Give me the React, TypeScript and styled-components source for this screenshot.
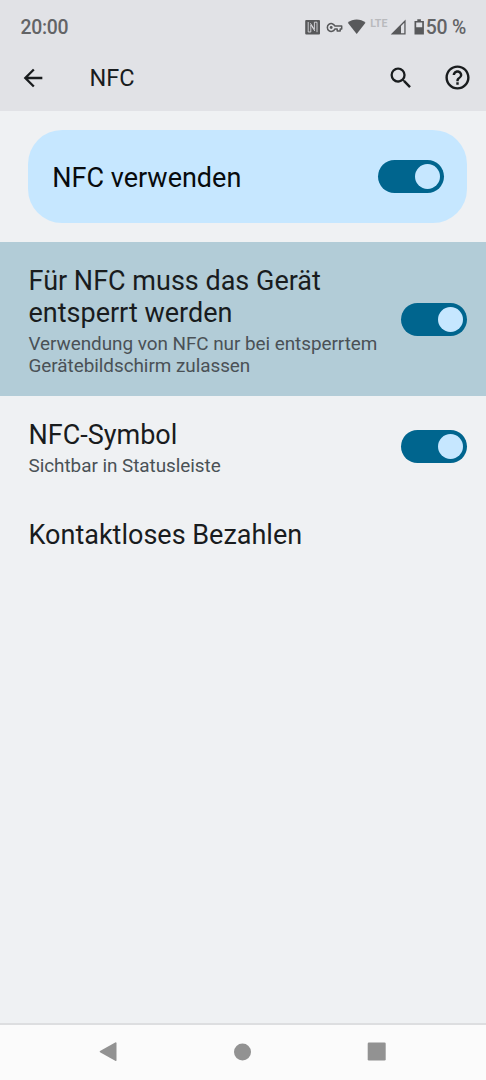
import React from 'react';
import styled, { createGlobalStyle } from 'styled-components';

const Global = createGlobalStyle`
  * { box-sizing: border-box; }
  body { margin: 0; background: #eff1f3; font-family: Roboto, sans-serif; color: #191c1e; }
`;
const Screen = styled.div`
  width: 486px; height: 1080px; display: flex; flex-direction: column; background: #eff1f3; overflow: hidden;
`;
const Header = styled.header`height: 111px; background: #e1e2e6; flex: none;`;
const StatusBar = styled.div`
  height: 52px; padding: 3px 20px 0; display: flex; align-items: center; justify-content: space-between;
  font-size: 19.4px; line-height: 24px; font-weight: 500; color: #636466;
`;
const Clock = styled.span`letter-spacing: -0.3px; padding-left: 0.5px;`;
const Battery = styled.span`letter-spacing: -0.2px; white-space: pre;`;
const StatusIcons = styled.svg`display: block;`;
const StatusRight = styled.div`display: flex; align-items: center;`;
const Lte = styled.text`font: 700 10.6px Roboto, sans-serif; fill: #b9babd;`;
const AppBar = styled.div`height: 52px; display: flex; align-items: center; padding: 0 14px 1px 19px;`;
const Title = styled.h1`margin: 1px auto 0 42.500px; font-size: 23.500px; font-weight: 400; line-height: 28px;`;
const Icon = styled.svg<{ $gap?: number }>`display: block; flex: none; margin-right: ${p => p.$gap ?? 0}px;`;
const MainCard = styled.section`
  flex: none; margin: 19px 19px 19px 28px; height: 93px; border-radius: 34px; background: #c6e7ff;
  display: flex; align-items: center; justify-content: space-between; padding: 0 23.500px 0 24.300px;
  font-size: 27px; color: #080b0d;
`;
const CardLabel = styled.span`padding-top: 2px;`;
const Row = styled.section<{ $height: number; $active?: boolean }>`
  flex: none; height: ${p => p.$height}px; padding: 0 19px 0 28.500px;
  background: ${p => (p.$active ? '#b2ccd7' : 'transparent')};
  display: flex; align-items: center; justify-content: space-between;
`;
const RowText = styled.div`display: flex; flex-direction: column; padding-top: 2px;`;
const RowTitle = styled.div`font-size: 27px; line-height: 32px; white-space: pre;`;
const RowNote = styled.div`
  font-size: 18.900px; line-height: 22px; letter-spacing: -0.04px; color: #4a5156; white-space: pre;
  margin-top: 4px; margin-bottom: -2px;
`;
const Track = styled.div`
  width: 66px; height: 33px; border-radius: 17px; background: #00658e; padding: 4px;
  display: flex; justify-content: flex-end; align-items: center; flex: none;
`;
const Thumb = styled.div`width: 25px; height: 25px; border-radius: 50%; background: #c6e7ff;`;
const NavBar = styled.nav`
  margin-top: auto; height: 57px; border-top: 2px solid #dddee0; background: #fbfbfb; flex: none;
  display: flex; align-items: center; justify-content: space-between; padding: 0 100px 2px 99px;
`;
const Switch = () => <Track><Thumb /></Track>;

export default function App() {
  return (
    <Screen>
      <Global />
      <Header>
        <StatusBar>
          <Clock>20:00</Clock>
          <StatusRight>
            <StatusIcons width="121" height="24" viewBox="305 15 121 24" fill="#58595b">
              <rect x="305.200" y="19" width="14.800" height="14.500" rx="1" />
              <path d="M308.200 21v10h2.600v-7.200l4 6.200M317 31.200v-10h-2.600v7.200l-4-6.200" fill="none" stroke="#e1e2e6" strokeWidth=".85" />
              <g fill="none" stroke="#58595b" strokeWidth="1.500" strokeLinejoin="round">
                <path d="M334.800 24.900a3.900 3.900 0 1 0 0 3.200h2.400v2h3v-2h1.500v-3.200z" />
              </g>
              <circle cx="331.200" cy="26.500" r="1.400" />
              <path d="M347.800 21.700c5-4.300 12.700-4.300 17.700 0L356.700 33z" />
              <Lte x="370.300" y="26.400">LTE</Lte>
              <path d="M405.600 18.500v14.900h-14.900zM404.300 21.800l-3.300 3.300v7.100h3.300z" fillRule="evenodd" />
              <path d="M417.300 18.300h3.600v1.700h3v13.500h-9.400V20h2.800zM416.200 21.500v4.700h6v-4.700z" fillRule="evenodd" />
            </StatusIcons>
            <Battery>50 %</Battery>
          </StatusRight>
        </StatusBar>
        <AppBar>
          <Icon width="28" height="28" viewBox="0 0 24 24" fill="#191c1e"><path d="M20 11H7.830l5.590-5.590L12 4l-8 8 8 8 1.410-1.410L7.830 13H20v-2z" /></Icon>
          <Title>NFC</Title>
          <Icon $gap={28.5} width="28" height="28" viewBox="0 0 24 24" fill="#191c1e"><path d="M15.5 14h-.79l-.28-.27A6.471 6.471 0 0 0 16 9.5 6.5 6.5 0 1 0 9.5 16c1.61 0 3.09-.59 4.23-1.57l.27.28v.79l5 4.99L20.49 19l-4.99-5zm-6 0C7.01 14 5 11.99 5 9.5S7.01 5 9.5 5 14 7.01 14 9.5 11.99 14 9.5 14z" /></Icon>
          <Icon width="29" height="29" viewBox="0 0 24 24" fill="#191c1e"><path d="M11 18h2v-2h-2v2zm1-16C6.48 2 2 6.48 2 12s4.48 10 10 10 10-4.480 10-10S17.520 2 12 2zm0 18c-4.410 0-8-3.590-8-8s3.590-8 8-8 8 3.590 8 8-3.590 8-8 8zm0-14c-2.210 0-4 1.790-4 4h2c0-1.100.9-2 2-2s2 .9 2 2c0 2-3 1.750-3 5h2c0-2.250 3-2.500 3-5 0-2.210-1.790-4-4-4z" /></Icon>
        </AppBar>
      </Header>
      <MainCard><CardLabel>NFC verwenden</CardLabel><Switch /></MainCard>
      <Row $height={154} $active>
        <RowText><RowTitle>{'Für NFC muss das Gerät\nentsperrt werden'}</RowTitle><RowNote>{'Verwendung von NFC nur bei entsperrtem\nGerätebildschirm zulassen'}</RowNote></RowText>
        <Switch />
      </Row>
      <Row $height={100}>
        <RowText><RowTitle>NFC-Symbol</RowTitle><RowNote>Sichtbar in Statusleiste</RowNote></RowText>
        <Switch />
      </Row>
      <Row $height={76}><RowText><RowTitle>Kontaktloses Bezahlen</RowTitle></RowText></Row>
      <NavBar>
        <Icon width="18" height="20" viewBox="0 0 18 20" fill="#929292"><path d="M16.200.500Q17.500 0 17.500 1.200v17q0 1.200-1.300.600L1 10.300q-.800-.600 0-1.200z" /></Icon>
        <Icon width="18" height="18" viewBox="0 0 18 18" fill="#929292"><circle cx="9.500" cy="8.900" r="8.500" /></Icon>
        <Icon width="19" height="19" viewBox="0 0 19 19" fill="#929292"><rect x=".7" y=".5" width="18" height="18" rx="1.200" /></Icon>
      </NavBar>
    </Screen>
  );
}
